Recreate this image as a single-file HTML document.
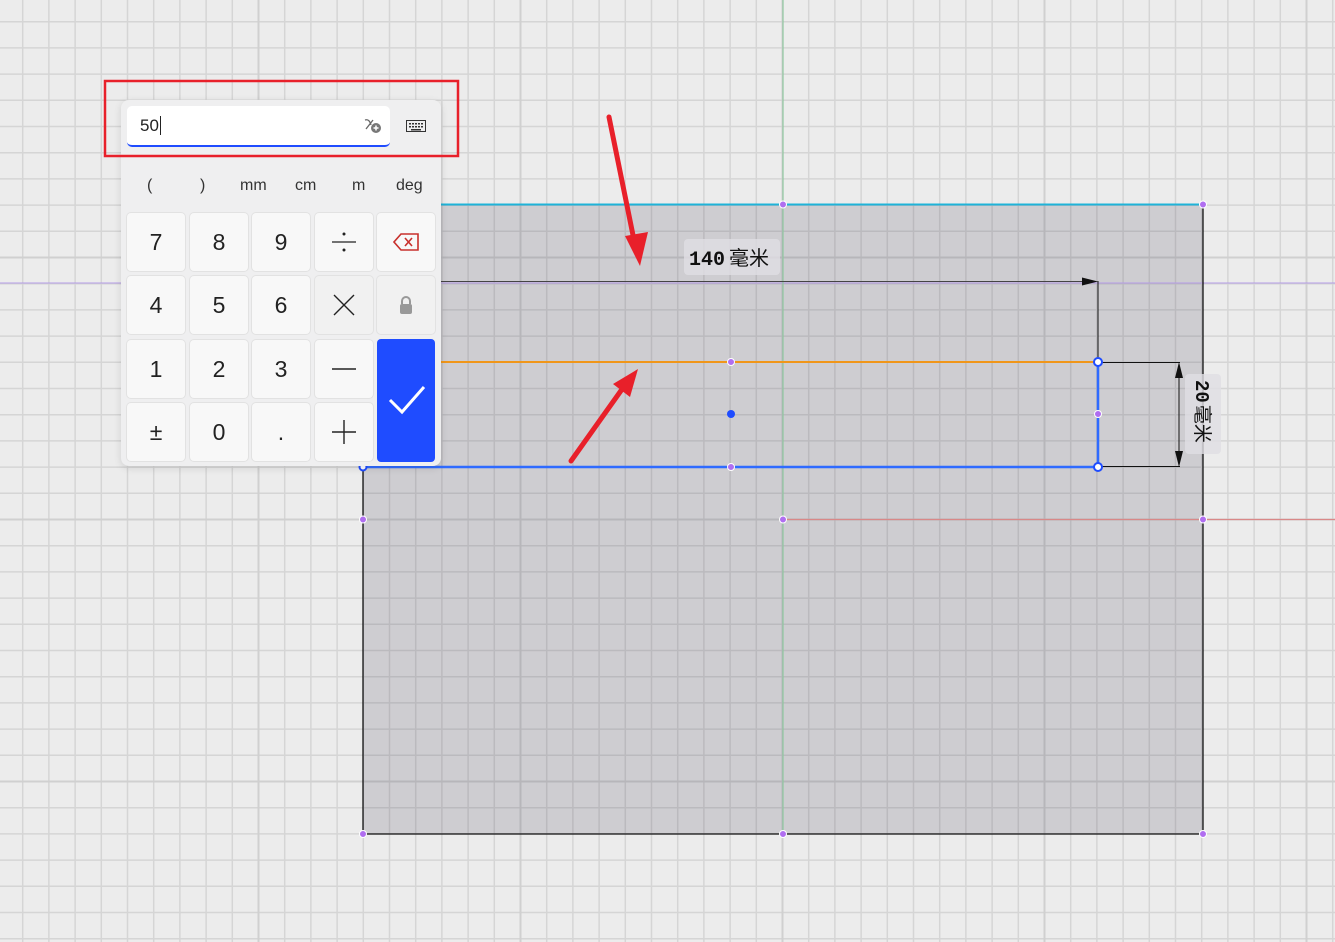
<!DOCTYPE html>
<html><head><meta charset="utf-8"><style>
html,body{margin:0;padding:0;width:1335px;height:942px;overflow:hidden;background:#ececec;font-family:"Liberation Sans","Noto Sans CJK SC",sans-serif}
body>svg{position:absolute;left:0;top:0}
.panel{position:absolute;left:121px;top:100px;width:320px;height:366px;background:#efeff0;border-radius:8px;box-shadow:0 2px 8px rgba(0,0,0,.12)}
.panel>svg{position:absolute}
.inp{position:absolute;left:6px;top:6px;width:263px;height:41px;background:#fff;border-radius:5px;border-bottom:2px solid #1f4cff;box-sizing:border-box}
.inp>span{position:absolute;left:13px;top:10px;font-size:17px;color:#222}
.inp svg{position:absolute}
.units{position:absolute;top:77px;font-size:16px;color:#333}
.k{position:absolute;width:58px;height:58px;background:#f8f8f8;border-radius:4px;box-shadow:0 0 0 1px #e2e2e2;font-size:23px;color:#222;display:flex;align-items:center;justify-content:center}
.k svg{position:static;display:block}
.k.g{background:#f1f1f1}
.ok{position:absolute;left:256px;top:239px;width:58px;height:123px;background:#1f4cff;border-radius:4px}
.ok svg{position:static;display:block}
</style></head><body>
<svg width="1335" height="942">
<defs>
<pattern id="gr" patternUnits="userSpaceOnUse" x="-3.5" y="-4.5" width="262" height="262">
<g stroke="#d5d5d5" stroke-width="1.5">
<line x1="26.2" y1="0" x2="26.2" y2="262"/><line x1="52.4" y1="0" x2="52.4" y2="262"/><line x1="78.6" y1="0" x2="78.6" y2="262"/><line x1="104.8" y1="0" x2="104.8" y2="262"/><line x1="131" y1="0" x2="131" y2="262"/><line x1="157.2" y1="0" x2="157.2" y2="262"/><line x1="183.4" y1="0" x2="183.4" y2="262"/><line x1="209.6" y1="0" x2="209.6" y2="262"/><line x1="235.8" y1="0" x2="235.8" y2="262"/>
<line y1="26.2" x1="0" y2="26.2" x2="262"/><line y1="52.4" x1="0" y2="52.4" x2="262"/><line y1="78.6" x1="0" y2="78.6" x2="262"/><line y1="104.8" x1="0" y2="104.8" x2="262"/><line y1="131" x1="0" y2="131" x2="262"/><line y1="157.2" x1="0" y2="157.2" x2="262"/><line y1="183.4" x1="0" y2="183.4" x2="262"/><line y1="209.6" x1="0" y2="209.6" x2="262"/><line y1="235.8" x1="0" y2="235.8" x2="262"/>
</g>
<g stroke="#d0d0d0" stroke-width="2"><line x1="0" y1="0" x2="0" y2="262"/><line x1="262" y1="0" x2="262" y2="262"/><line x1="0" y1="0" x2="262" y2="0"/><line x1="0" y1="262" x2="262" y2="262"/></g>
</pattern>
</defs>
<rect width="1335" height="942" fill="url(#gr)"/>
<rect x="363" y="204" width="840" height="630" fill="#3c3850" fill-opacity="0.17"/>
<line x1="0" y1="283" x2="1335" y2="283" stroke="#b49be6" stroke-width="1"/>
<line x1="783" y1="0" x2="783" y2="834" stroke="#8fc79f" stroke-width="1.2"/>
<line x1="783" y1="519.5" x2="1335" y2="519.5" stroke="#d98888" stroke-width="1.2"/>
<line x1="363" y1="204.5" x2="1203" y2="204.5" stroke="#1fb3d8" stroke-width="2"/>
<polyline points="1203,204 1203,834 363,834 363,467" fill="none" stroke="#111" stroke-width="1.3"/>
<line x1="440" y1="281.5" x2="1090" y2="281.5" stroke="#444" stroke-width="1"/>
<polygon points="1098,281.5 1082,277.5 1082,285.5" fill="#111"/>
<line x1="1098" y1="281" x2="1098" y2="362" stroke="#111" stroke-width="1"/>
<line x1="440" y1="362" x2="1098" y2="362" stroke="#f0961a" stroke-width="2"/>
<line x1="363" y1="467" x2="1098" y2="467" stroke="#2f6bff" stroke-width="2.5"/>
<line x1="1098" y1="362" x2="1098" y2="467" stroke="#2f6bff" stroke-width="2.5"/>
<line x1="1098" y1="362.5" x2="1180" y2="362.5" stroke="#111" stroke-width="1"/>
<line x1="1098" y1="466.5" x2="1180" y2="466.5" stroke="#111" stroke-width="1"/>
<line x1="1179" y1="370" x2="1179" y2="460" stroke="#111" stroke-width="1"/>
<polygon points="1179,362 1175,378 1183,378" fill="#111"/>
<polygon points="1179,467 1175,451 1183,451" fill="#111"/>
<rect x="684" y="239" width="96" height="36" rx="4" fill="#e0dfe3" fill-opacity="0.8"/>
<text x="689" y="265" font-family="Liberation Mono,Noto Sans CJK SC,monospace" font-size="20" font-weight="bold" fill="#111">140<tspan font-family="Noto Sans CJK SC,sans-serif" font-weight="normal" dx="4">毫米</tspan></text>
<rect x="1185" y="374" width="36" height="80" rx="4" fill="#e0dfe3" fill-opacity="0.8"/>
<text transform="translate(1196,380) rotate(90)" font-family="Liberation Mono,Noto Sans CJK SC,monospace" font-size="19" font-weight="bold" fill="#111">20<tspan font-family="Noto Sans CJK SC,sans-serif" font-weight="normal" dx="2">毫米</tspan></text>
<g fill="#b06ef0" stroke="#fff" stroke-width="1"><circle cx="783" cy="204.5" r="3.5"/><circle cx="1203" cy="204.5" r="3.5"/><circle cx="731" cy="362" r="3.5"/><circle cx="731" cy="467" r="3.5"/><circle cx="1098" cy="414" r="3.5"/><circle cx="363" cy="519.5" r="3.5"/><circle cx="783" cy="519.5" r="3.5"/><circle cx="1203" cy="519.5" r="3.5"/><circle cx="363" cy="834" r="3.5"/><circle cx="783" cy="834" r="3.5"/><circle cx="1203" cy="834" r="3.5"/></g>
<circle cx="731" cy="414" r="4" fill="#1f4cff"/>
<g fill="#fff" stroke="#1f4cff" stroke-width="2"><circle cx="1098" cy="362" r="4"/><circle cx="1098" cy="467" r="4"/><circle cx="363" cy="467" r="3.5"/></g>
</svg>

<div class="panel">
<div class="inp"><span>50<span style="border-left:1px solid #222;margin-left:1px"></span></span>
<svg style="left:236px;top:11px" width="20" height="18" viewBox="0 0 20 18"><path d="M2 3 C5 2 7 4 8 8 M3 12 L10 3" stroke="#666" stroke-width="1.3" fill="none"/><circle cx="13" cy="11" r="5" fill="#777"/><path d="M13 8.5v5M10.5 11h5" stroke="#fff" stroke-width="1.5"/></svg>
</div>
<svg style="left:285px;top:20px" width="20" height="12" viewBox="0 0 20 12"><rect x="0.5" y="0.5" width="19" height="11" fill="none" stroke="#333"/><g fill="#333"><rect x="3" y="3" width="2" height="1.5"/><rect x="6" y="3" width="2" height="1.5"/><rect x="9" y="3" width="2" height="1.5"/><rect x="12" y="3" width="2" height="1.5"/><rect x="15" y="3" width="2" height="1.5"/><rect x="3" y="6" width="2" height="1.5"/><rect x="6" y="6" width="2" height="1.5"/><rect x="9" y="6" width="2" height="1.5"/><rect x="12" y="6" width="2" height="1.5"/><rect x="15" y="6" width="2" height="1.5"/><rect x="5" y="9" width="10" height="1.5"/></g></svg>
<div class="units" style="left:26px">(</div><div class="units" style="left:79px">)</div><div class="units" style="left:119px">mm</div><div class="units" style="left:174px">cm</div><div class="units" style="left:231px">m</div><div class="units" style="left:275px">deg</div>

<div class="k" style="left:6px;top:113px">7</div><div class="k" style="left:69px;top:113px">8</div><div class="k" style="left:131px;top:113px">9</div>
<div class="k" style="left:194px;top:113px"><svg width="26" height="22"><line x1="1" y1="11" x2="25" y2="11" stroke="#222" stroke-width="1.3"/><circle cx="13" cy="3" r="1.5" fill="#222"/><circle cx="13" cy="19" r="1.5" fill="#222"/></svg></div>
<div class="k" style="left:256px;top:113px"><svg width="26" height="18"><path d="M8 1H25V17H8L1 9Z" fill="none" stroke="#c8302c" stroke-width="1.6"/><path d="M12 5l7 8M19 5l-7 8" stroke="#c8302c" stroke-width="1.6"/></svg></div>
<div class="k" style="left:6px;top:176px">4</div><div class="k" style="left:69px;top:176px">5</div><div class="k" style="left:131px;top:176px">6</div>
<div class="k g" style="left:194px;top:176px"><svg width="22" height="22"><path d="M1 1L21 21M21 1L1 21" stroke="#222" stroke-width="1.4"/></svg></div>
<div class="k g" style="left:256px;top:176px"><svg width="16" height="20"><path d="M4 9V6a4 4 0 0 1 8 0v3" fill="none" stroke="#999" stroke-width="2"/><rect x="2" y="9" width="12" height="10" rx="2" fill="#999"/></svg></div>
<div class="k" style="left:6px;top:240px">1</div><div class="k" style="left:69px;top:240px">2</div><div class="k" style="left:131px;top:240px">3</div>
<div class="k" style="left:194px;top:240px"><svg width="26" height="4"><line x1="1" y1="2" x2="25" y2="2" stroke="#222" stroke-width="1.4"/></svg></div>
<div class="k" style="left:6px;top:303px">±</div><div class="k" style="left:69px;top:303px">0</div><div class="k" style="left:131px;top:303px">.</div>
<div class="k" style="left:194px;top:303px"><svg width="24" height="24"><path d="M12 0V24M0 12H24" stroke="#222" stroke-width="1.4"/></svg></div>
<div class="ok"><svg width="58" height="123"><path d="M13 61L25 73L47 48" fill="none" stroke="#fff" stroke-width="3"/></svg></div>
</div>

<svg width="1335" height="942" style="pointer-events:none">
<rect x="105" y="81" width="353" height="75" fill="none" stroke="#e8202a" stroke-width="2.5"/>
<line x1="609" y1="117" x2="635" y2="245" stroke="#e8202a" stroke-width="5" stroke-linecap="round"/>
<polygon points="640,266 625,236 648,232" fill="#e8202a"/>
<line x1="571" y1="461" x2="625" y2="385" stroke="#e8202a" stroke-width="5" stroke-linecap="round"/>
<polygon points="638,369 630,397 613,384" fill="#e8202a"/>
</svg>
</body></html>
